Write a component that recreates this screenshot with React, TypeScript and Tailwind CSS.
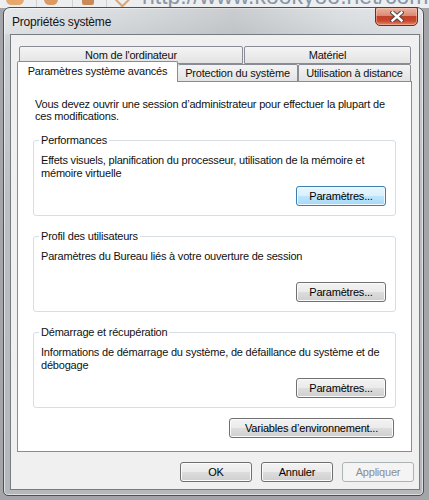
import React from "react";

type BtnKind = "normal" | "focus" | "disabled";

function Btn({ children, kind = "normal", w }: { children: React.ReactNode; kind?: BtnKind; w: string }) {
  const base =
    "flex items-center justify-center h-[20px] rounded-[3px] border text-[11px] leading-none whitespace-nowrap " + w;
  if (kind === "focus")
    return (
      <div
        className={
          base +
          " border-[#3c7fb1] text-black bg-[linear-gradient(#eaf6fd_0%,#d9f0fc_49%,#bee6fd_50%,#a7d9f5_100%)] shadow-[inset_0_0_0_1px_#eef8fe]"
        }
      >
        {children}
      </div>
    );
  if (kind === "disabled")
    return <div className={base + " border-[#adb2b5] bg-[#f4f4f4] text-[#8d8d8d]"}>{children}</div>;
  return (
    <div
      className={
        base +
        " border-[#707070] text-black bg-[linear-gradient(#f2f2f2_0%,#ebebeb_49%,#dddddd_50%,#cfcfcf_100%)] shadow-[inset_0_0_0_1px_#fbfbfb]"
      }
    >
      {children}
    </div>
  );
}

function Group({ title, lines, focus }: { title: string; lines: string[]; focus?: boolean }) {
  return (
    <div className="relative h-[76px] rounded-[3px] border border-[#d5dfe5] flex flex-col pt-[13px] pb-[9px] pl-[7px] pr-[9px]">
      <div className="absolute -top-[7px] left-[5px] bg-white px-[2px] text-[11px] leading-[13px] whitespace-nowrap">
        {title}
      </div>
      <div className="text-[11px] leading-[13px]">
        {lines.map((l) => (
          <div key={l} className="whitespace-nowrap">
            {l}
          </div>
        ))}
      </div>
      <div className="mt-auto flex justify-end">
        <Btn kind={focus ? "focus" : "normal"} w="w-[90px]">
          Paramètres...
        </Btn>
      </div>
    </div>
  );
}

const tabOff =
  "flex items-center justify-center border border-[#898c95] rounded-t-[2px] bg-[linear-gradient(#f4f4f4,#e3e3e3)] text-[11px] leading-none whitespace-nowrap";

export default function App() {
  return (
    <div className="relative w-[429px] h-[500px] overflow-hidden bg-[#a3a5a8] font-['Liberation_Sans',Arial,sans-serif] tracking-[-0.2px] text-[#111]">
      {/* browser behind */}
      <div className="absolute left-0 top-0 w-[429px] h-[8px] bg-[#eceef0] overflow-hidden">
        <div className="absolute left-[6px] -top-[6px] w-[18px] h-[11px] rounded-full bg-[#e7a86c]" />
        <div className="absolute left-[44px] -top-[6px] w-[14px] h-[11px] rounded-full bg-[#d99a63]" />
        <div className="absolute left-[82px] -top-[5px] w-[12px] h-[10px] rounded-[2px] bg-[#c98a56]" />
        <div className="absolute left-[116px] -top-[6px] w-[12px] h-[11px] rotate-45 border-2 border-[#e0a46e]" />
        <div className="absolute left-[36px] top-0 w-[1px] h-[8px] bg-[#cfd2d6]" />
        <div className="absolute left-[72px] top-0 w-[1px] h-[8px] bg-[#cfd2d6]" />
        <div className="absolute left-[106px] top-0 w-[1px] h-[8px] bg-[#cfd2d6]" />
        <div className="absolute left-[142px] -top-[15px] text-[23px] leading-[23px] tracking-normal text-[#8a96a6] whitespace-nowrap">
          http://www.kookyoo.net/compte/blog
        </div>
      </div>

      {/* window */}
      <div className="absolute left-[3px] top-[7px] w-[421px] h-[489px] rounded-t-[7px] rounded-b-[5px] border border-[#4b5056] bg-[linear-gradient(180deg,#dfe2e5_0%,#cdd0d3_8%,#bcc0c4_40%,#b4b8bc_100%)] shadow-[inset_0_0_0_1px_rgba(255,255,255,0.55)] flex flex-col">
        <div className="relative h-[26px] flex items-center pl-[8px] rounded-t-[7px] bg-[linear-gradient(90deg,rgba(255,255,255,0.25)_0%,rgba(255,255,255,0)_20%,rgba(60,60,60,0.12)_55%,rgba(255,255,255,0)_80%,rgba(255,255,255,0.2)_100%)]">
          <span className="text-[12px] leading-none text-[#141414] pt-[2px]">Propriétés système</span>
          <div className="absolute right-[5px] -top-[1px] w-[43px] h-[19px] rounded-b-[5px] rounded-t-[2px] border border-[#6a2e24] bg-[linear-gradient(180deg,#eab3a3_0%,#dc8a72_45%,#c2412a_50%,#c8472e_75%,#e28a68_100%)] shadow-[inset_0_0_0_1px_rgba(255,210,195,0.45)] flex items-center justify-center">
            <svg width="14" height="11" viewBox="0 0 14 11">
              <path d="M2.5 1.5 L11.5 9.5 M11.5 1.5 L2.5 9.5" stroke="#4a4a4a" strokeWidth="4.4" strokeLinecap="square" />
              <path d="M2.5 1.5 L11.5 9.5 M11.5 1.5 L2.5 9.5" stroke="#ffffff" strokeWidth="2.4" strokeLinecap="square" />
            </svg>
          </div>
        </div>

        {/* client area */}
        <div className="ml-[6px] w-[410px] h-[456px] border border-[#777c82] bg-[#f0f0f0] pt-[11px] pl-[6px] flex flex-col">
          {/* tabs */}
          <div className="flex ml-[2px] h-[18px]">
            <div className={tabOff + " w-[224px] h-[18px] pt-[1px]"}>Nom de l'ordinateur</div>
            <div className={tabOff + " w-[167px] h-[18px] ml-[1px] pt-[1px]"}>Matériel</div>
          </div>
          <div className="relative z-10 flex items-start h-[20px] -mt-[3px]">
            <div className="w-[161px] h-[21px] border border-b-0 border-[#898c95] rounded-t-[2px] bg-white flex items-center justify-center text-[11px] leading-none whitespace-nowrap pb-[1px]">
              Paramètres système avancés
            </div>
            <div className={tabOff + " w-[120px] h-[18px] mt-[3px] border-l-0 pt-[1px]"}>Protection du système</div>
            <div className={tabOff + " w-[113px] h-[18px] mt-[3px] pt-[1px]"}>Utilisation à distance</div>
          </div>

          {/* panel */}
          <div className="w-[395px] h-[371px] border border-[#898c95] bg-white flex flex-col pt-[16px] px-[15px]">
            <div className="pl-[2px] text-[11px] leading-[12px]">
              <div className="whitespace-nowrap">Vous devez ouvrir une session d’administrateur pour effectuer la plupart de</div>
              <div className="whitespace-nowrap">ces modifications.</div>
            </div>
            <div className="mt-[18px] flex flex-col gap-[20px]">
              <Group
                title="Performances"
                lines={["Effets visuels, planification du processeur, utilisation de la mémoire et", "mémoire virtuelle"]}
                focus
              />
              <Group title="Profil des utilisateurs" lines={["Paramètres du Bureau liés à votre ouverture de session"]} />
              <Group
                title="Démarrage et récupération"
                lines={["Informations de démarrage du système, de défaillance du système et de", "débogage"]}
              />
            </div>
            <div className="mt-[10px] flex justify-end pr-[2px]">
              <Btn w="w-[165px]">Variables d’environnement...</Btn>
            </div>
          </div>

          {/* dialog buttons */}
          <div className="mt-[10px] flex justify-end gap-[9px] pr-[5px]">
            <Btn w="w-[72px]">OK</Btn>
            <Btn w="w-[72px]">Annuler</Btn>
            <Btn kind="disabled" w="w-[72px]">
              Appliquer
            </Btn>
          </div>
        </div>
      </div>
    </div>
  );
}
